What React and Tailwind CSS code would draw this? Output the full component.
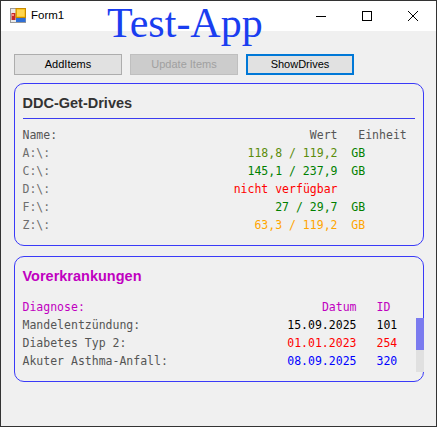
import React from "react";

const mono = { fontFamily: '"DejaVu Sans Mono", "Liberation Mono", monospace' };

function AppIcon() {
  return (
    <svg width="16" height="15" viewBox="0 0 16 15" className="shrink-0">
      <rect x="0.5" y="0.5" width="15" height="14" fill="#e8e8e8" stroke="#9a9a9a" />
      <rect x="1.5" y="5" width="4" height="7" fill="#c62828" />
      <rect x="2" y="6" width="2" height="2" fill="#ff8a80" />
      <rect x="6" y="0.5" width="9.5" height="9" fill="#f5b800" stroke="#c98a00" />
      <rect x="7" y="1.5" width="7.5" height="7" fill="#ffd54f" />
      <rect x="6" y="10" width="9.5" height="4" fill="#2f6fd6" />
    </svg>
  );
}

function WinButton({ children }) {
  return (
    <div className="w-[46px] h-[29px] flex items-center justify-center">{children}</div>
  );
}

function Btn({ label, variant }) {
  const cls =
    variant === "disabled"
      ? "bg-[#cccccc] border border-[#bfbfbf] text-[#a0a0a0]"
      : variant === "focus"
      ? "bg-[#e1e1e1] border-2 border-[#0078d7] text-black"
      : "bg-[#e1e1e1] border border-[#adadad] text-black";
  return (
    <div
      className={`w-[108px] h-[21px] flex items-center justify-center text-[11px] leading-none ${cls}`}
      style={{ fontFamily: '"Liberation Sans", Arial, sans-serif' }}
    >
      {label}
    </div>
  );
}

const drives = [
  { n: "A:\\:", v: "118,8 / 119,2", u: "  GB", vc: "text-[#5a8c0a]", uc: "text-[#008000]" },
  { n: "C:\\:", v: "145,1 / 237,9", u: "  GB", vc: "text-[#008000]", uc: "text-[#008000]" },
  { n: "D:\\:", v: "nicht verfügbar", u: "", vc: "text-[#ff0000]", uc: "text-[#ff0000]" },
  { n: "F:\\:", v: "27 / 29,7", u: "  GB", vc: "text-[#008000]", uc: "text-[#008000]" },
  { n: "Z:\\:", v: "63,3 / 119,2", u: "  GB", vc: "text-[#ffa500]", uc: "text-[#ffa500]" },
];

const diags = [
  { n: "Mandelentzündung:", d: "15.09.2025", id: "101", c: "text-black" },
  { n: "Diabetes Typ 2:", d: "01.01.2023", id: "254", c: "text-[#ff0000]" },
  { n: "Akuter Asthma-Anfall:", d: "08.09.2025", id: "320", c: "text-[#0000ff]" },
];

const titleFont = { fontFamily: '"Liberation Sans", Arial, sans-serif' };

export default function App() {
  return (
    <div className="relative w-[437px] h-[427px] border border-[#333333] bg-[#f0f0f0] flex flex-col overflow-hidden">
      {/* title bar */}
      <div className="h-[30px] bg-white flex items-start shrink-0">
        <div className="flex items-center h-[29px] pl-[9px] gap-[5px]">
          <AppIcon />
          <span className="text-[11.5px] text-black" style={titleFont}>
            Form1
          </span>
        </div>
        <div className="ml-auto flex">
          <WinButton>
            <svg width="10" height="10" viewBox="0 0 10 10">
              <line x1="0" y1="5.5" x2="10" y2="5.5" stroke="#000" strokeWidth="1" />
            </svg>
          </WinButton>
          <WinButton>
            <svg width="10" height="10" viewBox="0 0 10 10">
              <rect x="0.5" y="0.5" width="9" height="9" fill="none" stroke="#000" strokeWidth="1" />
            </svg>
          </WinButton>
          <WinButton>
            <svg width="10" height="10" viewBox="0 0 10 10">
              <path d="M0 0 L10 10 M10 0 L0 10" stroke="#000" strokeWidth="1" />
            </svg>
          </WinButton>
        </div>
      </div>

      {/* big label overlay */}
      <div
        className="absolute left-[106px] top-[1px] text-[42px] leading-[42px] text-[#1a3ef0] whitespace-nowrap"
        style={{ fontFamily: '"Liberation Serif", "Times New Roman", serif' }}
      >
        Test-App
      </div>

      {/* buttons */}
      <div className="flex gap-[8px] pl-[13px] mt-[23px]">
        <Btn label="AddItems" />
        <Btn label="Update Items" variant="disabled" />
        <Btn label="ShowDrives" variant="focus" />
      </div>

      {/* panel 1 */}
      <div className="ml-[13px] mt-[8px] w-[410px] h-[163px] border-[1.5px] border-[#3a3af8] rounded-[10px] pl-[7.5px] pr-[8.5px] pt-[8.5px] pb-[10.5px] flex flex-col">
        <div className="text-[14.5px] leading-[20px] font-bold text-[#333333]" style={titleFont}>
          DDC-Get-Drives
        </div>
        <div className="mt-[5px] h-px bg-[#3c3cf0]" />
        <div className="mt-[7px] text-[11.5px] leading-[18px]" style={mono}>
          <div className="flex text-[#555555]">
            <span className="flex-1">Name:</span>
            <span className="text-right">Wert</span>
            <span className="w-[77px] whitespace-pre">{"   Einheit"}</span>
          </div>
          {drives.map((r) => (
            <div key={r.n} className="flex">
              <span className="flex-1 text-[#6e6e6e]">{r.n}</span>
              <span className={`text-right whitespace-pre ${r.vc}`}>{r.v}</span>
              <span className={`w-[77px] whitespace-pre ${r.uc}`}>{r.u}</span>
            </div>
          ))}
        </div>
      </div>

      {/* panel 2 */}
      <div className="ml-[13px] mt-[10px] w-[410px] h-[126px] border-[1.5px] border-[#3a3af8] rounded-[10px] pl-[7.5px] pr-[8.5px] pt-[8.5px] pb-[9.5px] flex flex-col">
        <div className="text-[14.5px] leading-[20px] font-bold text-[#c000c0]" style={titleFont}>
          Vorerkrankungen
        </div>
        <div className="mt-[5px] h-px bg-[#3c3cf0]" />
        <div className="mt-[7px] text-[11.5px] leading-[18px]" style={mono}>
          <div className="flex text-[#c000c0]">
            <span className="flex-1">Diagnose:</span>
            <span className="text-right">Datum</span>
            <span className="w-[58px] pl-[20px]">ID</span>
          </div>
          <div className="flex">
            <div className="flex-1">
              {diags.map((r) => (
                <div key={r.n} className="flex">
                  <span className="flex-1 text-[#555555]">{r.n}</span>
                  <span className={`text-right ${r.c}`}>{r.d}</span>
                  <span className={`w-[58px] pl-[20px] ${r.c}`}>{r.id}</span>
                </div>
              ))}
            </div>
            <div className="ml-[1px] -mr-[9px] mt-[2px] w-[8px] h-[54px] bg-[#e0e0e0] flex flex-col shrink-0">
              <div className="h-[32px] bg-[#7b7bef]" />
            </div>
          </div>
        </div>
      </div>
    </div>
  );
}
